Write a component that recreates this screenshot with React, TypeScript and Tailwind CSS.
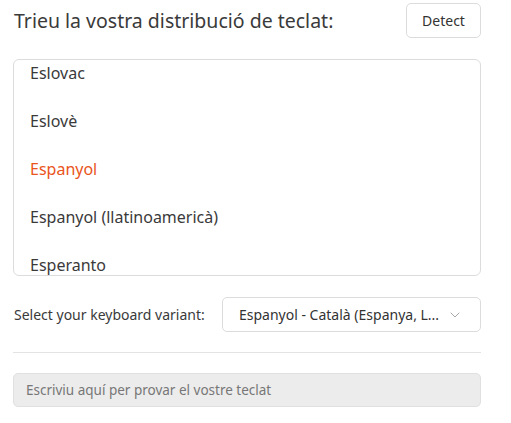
import { useEffect, useRef, useState } from 'react'
import { ChevronDown } from 'lucide-react'

const LAYOUTS = ['Eslovac', 'Eslovè', 'Espanyol', 'Espanyol (llatinoamericà)', 'Esperanto']

const FONT = "font-['Noto_Sans','Open_Sans',sans-serif]"

export default function App() {
  const [selected, setSelected] = useState('Espanyol')
  const listRef = useRef<HTMLDivElement | null>(null)

  useEffect(() => {
    if (listRef.current) listRef.current.scrollTop = 11
  }, [])

  return (
    <div className={`${FONT} h-[423px] w-[511px] bg-white text-[#3a3a3a]`}>
      <div className="flex items-center justify-between pl-[14px] pr-[30px] pt-[3px]">
        <div className="whitespace-nowrap text-[19.5px] leading-[35px]">
          Trieu la vostra distribució de teclat:
        </div>
        <button
          type="button"
          className="h-[35px] w-[75px] rounded-[5px] border border-[#dcdcdc] text-[14px] text-[#333]"
        >
          Detect
        </button>
      </div>

      <div
        ref={listRef}
        className="ml-[13px] mr-[30px] mt-[21px] h-[217px] overflow-hidden rounded-[6px] border border-[#dcdcdc]"
      >
        {LAYOUTS.map((l) => (
          <div
            key={l}
            onClick={() => setSelected(l)}
            className={`flex h-[48px] items-center pl-[16px] text-[16px] ${
              l === selected ? 'text-[#e95420]' : 'text-[#3a3a3a]'
            }`}
          >
            {l}
          </div>
        ))}
      </div>

      <div className="mt-[21px] flex items-center pl-[14px] pr-[30px]">
        <div className="w-[208px] whitespace-nowrap text-[14px] leading-[20px]">
          Select your keyboard variant:
        </div>
        <button
          type="button"
          className="flex h-[35px] flex-1 items-center justify-between rounded-[5px] border border-[#dcdcdc] pl-[16px] pr-[17px] text-[14px] text-[#333]"
        >
          <span className="whitespace-nowrap">Espanyol - Català (Espanya, L...</span>
          <ChevronDown size={16} strokeWidth={1.1} className="text-[#888]" />
        </button>
      </div>

      <div className="ml-[13px] mr-[30px] mt-[20px] h-px bg-[#e3e3e3]" />

      <div className="ml-[13px] mr-[30px] mt-[20px] flex h-[34px] items-center rounded-[5px] border border-[#e0e0e0] bg-[#ececec] pl-[12px] text-[13.5px] text-[#777]">
        Escriviu aquí per provar el vostre teclat
      </div>
    </div>
  )
}
